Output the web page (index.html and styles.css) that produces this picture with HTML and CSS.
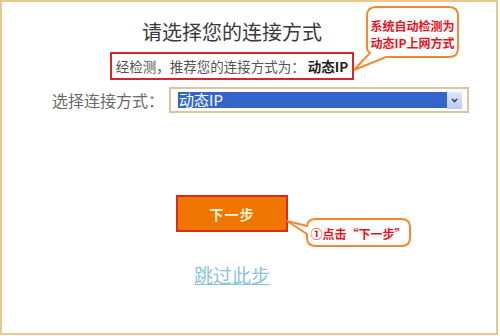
FILE: index.html
```html
<!DOCTYPE html>
<html lang="zh-CN">
<head>
  <meta charset="UTF-8" />
  <title>选择连接方式</title>
  <link rel="stylesheet" href="styles.css">
</head>
<body>
  <div class="frame">
    <div class="content">
      <h1 class="title">请选择您的连接方式</h1>
      <div class="detect">经检测，推荐您的连接方式为： <b>动态IP</b></div>
      <div class="select-row">
        <span class="label">选择连接方式：</span>
        <div class="select">
          <span class="option">动态IP</span>
          <span class="arrow">
            <svg width="7" height="5" viewBox="0 0 7 5"><path d="M1 1 L3.5 3.5 L6 1" fill="none" stroke="#2a3f66" stroke-width="1.6"/></svg>
          </span>
        </div>
      </div>
      <button class="next">下一步</button>
      <a class="skip" href="#">跳过此步</a>
    </div>

    <!-- callout bubbles -->
    <svg class="bubble" width="498" height="335" viewBox="2 2 498 335">
      <path d="M376 7 H449 Q458 7 458 16 V48 Q458 57 449 57 H386 L354 70 L370 53 Q367 51 367 48 V16 Q367 7 376 7 Z" fill="#fff" stroke="#f08a30" stroke-width="2"/>
      <path d="M316 219 H401 Q410 219 410 227 V238 Q410 246 401 246 H316 Q307 246 307 238 V234 L287 221 L307 226 V227 Q307 219 316 219 Z" fill="#fff" stroke="#f08a30" stroke-width="2"/>
    </svg>
    <div class="tip tip-auto">系统自动检测为<br>动态IP上网方式</div>
    <div class="tip tip-next">①点击“下一步”</div>
  </div>
</body>
</html>
```

FILE: styles.css
```css
* { margin: 0; padding: 0; box-sizing: border-box; }

body {
  background: #fff;
  font-family: "Noto Sans CJK SC", "Noto Sans", sans-serif;
}

.frame {
  position: relative;
  width: 498px;
  height: 335px;
  border: 2px solid #e9c98f;
}

.content {
  width: 460px;
  display: flex;
  flex-direction: column;
  align-items: center;
  padding-top: 17px;
}

.title {
  font-size: 20px;
  font-weight: normal;
  line-height: 26px;
  color: #3a3a3a;
}

.detect {
  margin-top: 7px;
  width: 244px;
  height: 28px;
  border: 2px solid #d6262c;
  font-size: 13.5px;
  line-height: 24px;
  color: #555;
  text-align: center;
  white-space: nowrap;
}
.detect b { color: #222; }

.select-row {
  align-self: flex-start;
  margin: 7px 0 0 50px;
  display: flex;
  align-items: center;
  gap: 10px;
  width: 420px;
}
.label {
  width: 107px;
  font-size: 16px;
  color: #6a6a6a;
  white-space: nowrap;
}
.select {
  flex: none;
  width: 300px;
  height: 26px;
  border: 2px solid #dcc59e;
  display: flex;
  align-items: center;
  padding: 0 5px 0 7px;
}
.option {
  flex: 1;
  height: 16px;
  background: #3366c8;
  color: #fff;
  font-size: 15px;
  line-height: 16px;
  padding-left: 1px;
}
.arrow {
  width: 15px;
  height: 17px;
  background: linear-gradient(#dfe8f7, #b9cbea);
  display: flex;
  align-items: center;
  justify-content: center;
}

.next {
  margin-top: 82px;
  width: 112px;
  height: 37px;
  background: #ef7600;
  border: 2px solid #e2281c;
  color: #fff3d2;
  font-family: inherit;
  font-size: 14px;
  font-weight: bold;
  letter-spacing: 1px;
}

.skip {
  margin-top: 29px;
  font-size: 19px;
  color: #8cc3dd;
  text-decoration: underline;
}

.bubble {
  position: absolute;
  left: 0;
  top: 0;
  pointer-events: none;
}

.tip {
  position: absolute;
  color: #e5141c;
  font-weight: bold;
  font-size: 12px;
  text-align: center;
}
.tip-auto {
  left: 365px;
  top: 15px;
  width: 91px;
  line-height: 17px;
}
.tip-next {
  left: 305px;
  top: 224px;
  width: 103px;
  line-height: 16px;
}
```
